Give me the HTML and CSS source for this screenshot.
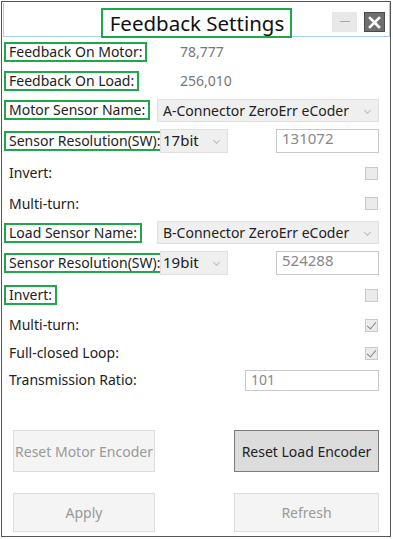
FILE: index.html
```html
<!DOCTYPE html>
<html lang="en">
    <head>
        <meta charset="UTF-8" />
        <meta name="viewport" content="width=device-width, initial-scale=1.0" />
        <title>Feedback Settings</title>
        <link rel="stylesheet" href="styles.css">
    </head>
    <body>
        <div class="window">
            <div class="titlebar">
                <span></span>
                <h1 class="title mark">Feedback Settings</h1>
                <div class="controls">
                    <span class="btn-min"></span>
                    <span class="btn-close">
                        <svg width="13" height="13" viewBox="0 0 13 13">
                            <path d="M2 2 L11 11 M11 2 L2 11" stroke="#fff" stroke-width="2.6" stroke-linecap="square" />
                        </svg>
                    </span>
                </div>
            </div>

            <div class="content">
                <div class="row h29">
                    <span class="label mark">Feedback On Motor:</span>
                    <span class="value">78,777</span>
                </div>
                <div class="row h29">
                    <span class="label mark">Feedback On Load:</span>
                    <span class="value">256,010</span>
                </div>
                <div class="row h30">
                    <span class="label mark">Motor Sensor Name:</span>
                    <div class="select wide">A-Connector ZeroErr eCoder<span class="chev"></span></div>
                </div>
                <div class="row h32">
                    <span class="label mark">Sensor Resolution(SW):</span>
                    <div class="pair">
                        <div class="select small">17bit<span class="chev"></span></div>
                        <div class="input res">131072</div>
                    </div>
                </div>
                <div class="row h32">
                    <span class="label">Invert:</span>
                    <span class="check"></span>
                </div>
                <div class="row h29">
                    <span class="label">Multi-turn:</span>
                    <span class="check"></span>
                </div>
                <div class="row h29">
                    <span class="label mark">Load Sensor Name:</span>
                    <div class="select wide">B-Connector ZeroErr eCoder<span class="chev"></span></div>
                </div>
                <div class="row h32">
                    <span class="label mark">Sensor Resolution(SW):</span>
                    <div class="pair">
                        <div class="select small">19bit<span class="chev"></span></div>
                        <div class="input res">524288</div>
                    </div>
                </div>
                <div class="row h32">
                    <span class="label mark">Invert:</span>
                    <span class="check"></span>
                </div>
                <div class="row h28">
                    <span class="label">Multi-turn:</span>
                    <span class="check checked"></span>
                </div>
                <div class="row h28">
                    <span class="label">Full-closed Loop:</span>
                    <span class="check checked"></span>
                </div>
                <div class="row h26">
                    <span class="label">Transmission Ratio:</span>
                    <div class="input ratio">101</div>
                </div>
            </div>

            <div class="buttons">
                <button class="tall disabled">Reset Motor Encoder</button>
                <button class="tall active">Reset Load Encoder</button>
                <button class="disabled">Apply</button>
                <button class="disabled">Refresh</button>
            </div>
        </div>
    </body>
</html>
```

FILE: styles.css
```css
/* Reset */
* {
    box-sizing: border-box;
    margin: 0;
    padding: 0;
}

body {
    font-family: "Noto Sans", "Open Sans", sans-serif;
    font-size: 14px;
    color: #222;
    background: #fff;
    padding: 1px 2px 2px 1px;
}

.window {
    height: 536px;
    border: 1px solid #555;
    background: #fff;
}

/* Title bar */
.titlebar {
    display: grid;
    grid-template-columns: 1fr auto 1fr;
    align-items: center;
    height: 34px;
    margin: 1px 0 0 1px;
    border-left: 1px solid #a9cdf1;
    border-right: 1px solid #a9cdf1;
    border-bottom: 1px solid #a9cdf1;
}

.title {
    font-size: 20.5px;
    font-weight: normal;
    color: #111;
    line-height: 26px;
    padding: 0 6px 0 7px;
    margin-top: 5px;
}

.controls {
    justify-self: end;
    display: flex;
    gap: 7px;
    margin-right: 4px;
    margin-top: 3px;
}

.btn-min {
    width: 25px;
    height: 20px;
    background: #e8e8e8;
    position: relative;
}

.btn-min::after {
    content: "";
    position: absolute;
    left: 8px;
    top: 9px;
    width: 10px;
    height: 1px;
    background: #a8a8a8;
}

.btn-close {
    width: 21px;
    height: 20px;
    background: #6f6f6f;
    border: 1px solid #4a4a4a;
    display: flex;
    align-items: center;
    justify-content: center;
}

/* Annotation box */
.mark {
    border: 2px solid #1fa84b;
}

/* Rows */
.content {
    padding: 0 11px 0 2px;
}

.row {
    display: grid;
    grid-template-columns: 153px 1fr;
    align-items: center;
}

.h26 { height: 26px; }
.h28 { height: 28px; }
.h29 { height: 29px; }
.h30 { height: 30px; }
.h32 { height: 32px; }

.label {
    justify-self: start;
    white-space: nowrap;
    line-height: 16px;
    padding: 0 3px;
    border: 2px solid transparent;
}

.label.mark {
    border-color: #1fa84b;
}

.value {
    padding-left: 23px;
    color: #777;
}

.select {
    position: relative;
    height: 23px;
    line-height: 21px;
    padding-left: 5px;
    background: #efefef;
    border: 1px solid #e0e0e0;
    color: #222;
}

.select.small {
    width: 68px;
    height: 24px;
    padding-left: 2px;
    margin-left: 3px;
    font-size: 15px;
}

.chev {
    position: absolute;
    right: 8px;
    top: 8px;
    width: 5px;
    height: 5px;
    border-right: 1px solid #bbb;
    border-bottom: 1px solid #bbb;
    transform: rotate(45deg);
}

.pair {
    display: flex;
    justify-content: space-between;
    align-items: center;
}

.input {
    background: #fff;
    border: 1px solid #c9c9c9;
    color: #888;
    line-height: 17px;
    padding: 0 5px;
}

.input.res {
    width: 103px;
    height: 24px;
    font-size: 15px;
}

.input.ratio {
    justify-self: end;
    width: 134px;
    height: 21px;
}

.check {
    justify-self: end;
    width: 13px;
    height: 13px;
    margin-right: 1px;
    background: #ebebeb;
    border: 1px solid #c9c9c9;
    position: relative;
}

.check.checked::after {
    content: "";
    position: absolute;
    left: 3px;
    top: 0px;
    width: 4px;
    height: 8px;
    border-right: 1.5px solid #888;
    border-bottom: 1.5px solid #888;
    transform: rotate(40deg);
}

/* Buttons */
.buttons {
    display: grid;
    grid-template-columns: 142px 145px;
    justify-content: space-between;
    row-gap: 21px;
    padding: 37px 11px 0 11px;
}

button {
    font-family: "Noto Sans", "Open Sans", sans-serif;
    font-size: 14px;
    height: 39px;
    border: 1px solid #dcdcdc;
    background: #f4f4f4;
    color: #999;
}

button.tall {
    height: 42px;
}

button.active {
    background: #dcdcdc;
    border-color: #7a7a7a;
    color: #222;
}
```
